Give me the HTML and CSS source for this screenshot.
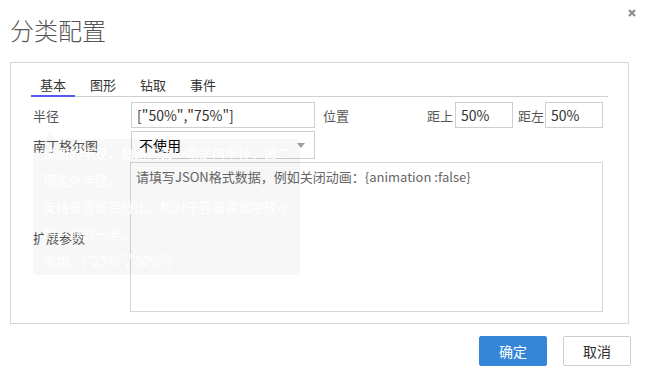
FILE: index.html
```html
<!DOCTYPE html>
<html lang="zh-CN">
<head>
    <meta charset="UTF-8">
    <title>分类配置</title>
    <link rel="stylesheet" href="styles.css">
</head>
<body>
<div class="dialog">
    <header class="dialog-head">
        <h1>分类配置</h1>
        <span class="close" aria-label="关闭">
            <svg width="8" height="8" viewBox="0 0 8 8"><path d="M1 1L7 7M7 1L1 7" stroke="#8a8a8a" stroke-width="2"/></svg>
        </span>
    </header>
    <section class="panel">
        <nav class="tabs">
            <div class="tab active">基本</div>
            <div class="tab">图形</div>
            <div class="tab">钻取</div>
            <div class="tab">事件</div>
        </nav>
        <form class="form">
            <div class="row">
                <label class="label" for="radius">半径</label>
                <input class="field wide" id="radius" value='["50%","75%"]'>
                <span class="text pos">位置</span>
                <span class="text push">距上</span>
                <input class="field small" value="50%">
                <span class="text left">距左</span>
                <input class="field small tight" value="50%">
            </div>
            <div class="row">
                <label class="label">南丁格尔图</label>
                <div class="select">
                    <span>不使用</span>
                    <svg width="8" height="5" viewBox="0 0 8 5"><path d="M0 0H8L4 5Z" fill="#a0a0a0"/></svg>
                </div>
            </div>
            <div class="row">
                <label class="label" for="extra">扩展参数</label>
                <textarea class="area" id="extra" placeholder="请填写JSON格式数据，例如关闭动画：{animation :false}"></textarea>
            </div>
        </form>
        <div class="tooltip">
            饼图的半径，数组的第一项是内半径，第二项是外半径。<br>
            支持设置成百分比，相对于容器高宽中较小的一项的一半。<br>
            例如：["25%","50%"]
        </div>
    </section>
    <footer class="actions">
        <button class="btn primary">确定</button>
        <button class="btn">取消</button>
    </footer>
</div>
</body>
</html>
```

FILE: styles.css
```css
* {
    box-sizing: border-box;
    font-family: "Noto Sans CJK SC", "DejaVu Sans", sans-serif;
}

body {
    margin: 0;
    background-color: white;
    color: #333;
    font-size: 14px;
}

.dialog {
    width: 647px;
    height: 380px;
}

.dialog-head {
    display: flex;
    justify-content: space-between;
    height: 62px;
    padding: 0 11px 0 10px;
}

h1 {
    margin: 0;
    padding-top: 17px;
    font-size: 24px;
    line-height: 26px;
    font-weight: 300;
    color: #555;
}

.close {
    display: flex;
    padding-top: 9px;
    height: 20px;
}

.panel {
    position: relative;
    margin: 0 18px 0 10px;
    border: 1px solid #d6d6d6;
    padding: 11px 20px 11px 20px;
}

.tabs {
    display: flex;
    height: 23px;
    border-bottom: 1px solid #cfcfcf;
}

.tab {
    width: 44px;
    height: 23px;
    margin-right: 6px;
    margin-bottom: -1px;
    line-height: 21px;
    text-align: center;
    font-size: 13px;
    color: #333;
    border-bottom: 2px solid transparent;
}

.tab.active {
    border-bottom-color: #5559ef;
}

.form {
    display: grid;
    row-gap: 3px;
    margin: 5px 5px 0 0;
}

.row {
    display: flex;
    align-items: center;
}

.label {
    width: 100px;
    flex-shrink: 0;
    padding-left: 2px;
    color: #555;
    font-size: 13px;
}

.text {
    color: #555;
    font-size: 13px;
}

.field {
    height: 26px;
    border: 1px solid #cfcfcf;
    padding: 0 5px;
    font-size: 14px;
    color: #333;
    outline: none;
}

.field.wide {
    width: 184px;
}

.field.small {
    width: 58px;
    margin-left: 2px;
}

.field.tight {
    margin-left: 1px;
}

.pos {
    margin-left: 8px;
}

.push {
    margin-left: auto;
}

.left {
    margin-left: 5px;
}

.select {
    display: flex;
    justify-content: space-between;
    align-items: center;
    width: 184px;
    height: 28px;
    border: 1px solid #cfcfcf;
    padding: 0 9px 0 7px;
    color: #000;
    font-size: 14px;
}

.area {
    flex: 1;
    height: 150px;
    margin-left: -1px;
    border: 1px solid #d6d6d6;
    padding: 4px 5px;
    font-size: 13px;
    line-height: 20px;
    resize: none;
    outline: none;
}

.area::placeholder {
    color: #666;
}

.tooltip {
    position: absolute;
    left: 22px;
    top: 76px;
    width: 267px;
    height: 136px;
    padding: 0 10px;
    border-radius: 4px;
    background-color: rgba(0, 0, 0, 0.03);
    color: white;
    font-size: 13px;
    line-height: 27px;
}

.tooltip::before {
    content: "";
    position: absolute;
    left: 10px;
    top: -6px;
    border: 6px solid transparent;
    border-top: 0;
    border-bottom-color: rgba(0, 0, 0, 0.03);
}

.actions {
    display: flex;
    justify-content: flex-end;
    gap: 16px;
    padding: 12px 16px 0 0;
}

.btn {
    width: 68px;
    height: 30px;
    border: 1px solid #cdcdcd;
    border-radius: 2px;
    background-color: white;
    color: #333;
    font-size: 14px;
    cursor: pointer;
}

.btn.primary {
    border-color: #3586d9;
    background-color: #3586d9;
    color: white;
}
```
